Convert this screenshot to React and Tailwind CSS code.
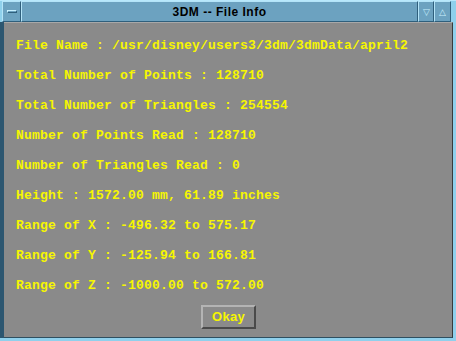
import React from 'react'

const LINES = [
  'File Name : /usr/disney/users3/3dm/3dmData/april2',
  'Total Number of Points : 128710',
  'Total Number of Triangles : 254554',
  'Number of Points Read : 128710',
  'Number of Triangles Read : 0',
  'Height : 1572.00 mm, 61.89 inches',
  'Range of X : -496.32 to 575.17',
  'Range of Y : -125.94 to 166.81',
  'Range of Z : -1000.00 to 572.00',
]

function FrameButton({ children, className = '' }) {
  return (
    <div
      className={`flex items-center justify-center h-full border-t border-l border-[#b4e4f8] border-r border-b border-r-[#2f5f7c] border-b-[#2f5f7c] bg-[#6ca2c0] ${className}`}
    >
      {children}
    </div>
  )
}

export default function App() {
  return (
    <div className="w-[456px] h-[341px] bg-[#8fd0ec] flex flex-col overflow-hidden">
      {/* title bar */}
      <div className="flex h-[22px] border-t border-[#b8e8fc] bg-[#6ca2c0]">
        <div className="w-[2px] bg-[#8fd0ec]" />
        <FrameButton className="w-[19px]">
          <div className="w-[10px] h-[3px] border border-t-[#c8f0ff] border-l-[#c8f0ff] border-r-[#2f5f7c] border-b-[#2f5f7c] bg-[#6ca2c0]" />
        </FrameButton>
        <FrameButton className="flex-1">
          <span className="text-[12px] font-bold text-black tracking-[0.5px] font-['Liberation_Sans',sans-serif]">
            3DM -- File Info
          </span>
        </FrameButton>
        <FrameButton className="w-[16px]">
          <span className="text-[9px] leading-none text-[#c8f0ff]">▽</span>
        </FrameButton>
        <FrameButton className="w-[17px]">
          <span className="text-[9px] leading-none text-[#c8f0ff]">△</span>
        </FrameButton>
        <div className="w-[5px] bg-[#8fd0ec]" />
      </div>

      {/* body */}
      <div className="flex flex-1">
        <div className="w-[4px] bg-[#2c5670]" />
        <div className="flex-1 bg-[#8a8a8a] border-t border-[#a8a8a8] border-r border-r-[#3a3a3a] border-b border-b-[#2f4f60] flex flex-col">
          <div className="flex flex-col pl-[12px] pt-[14px] gap-[12px] font-['Liberation_Mono',monospace] font-bold text-[13px] tracking-[0.2px] leading-[18px] text-[#f6f600]">
            {LINES.map(l => (
              <div key={l} className="whitespace-pre">{l}</div>
            ))}
          </div>
          <div className="flex justify-center mt-[10px] pl-[1px]">
            <button className="w-[55px] h-[24px] bg-[#8a8a8a] border-2 border-t-[#b4b4b4] border-l-[#b4b4b4] border-r-[#4a4a4a] border-b-[#4a4a4a] text-[#f6f600] font-bold text-[13px] font-['Liberation_Sans',sans-serif] tracking-[0.3px]">
              Okay
            </button>
          </div>
        </div>
        <div className="w-[3px] bg-[#8fd0ec]" />
      </div>
      <div className="h-[3px] bg-[#8fd0ec]" />
    </div>
  )
}
